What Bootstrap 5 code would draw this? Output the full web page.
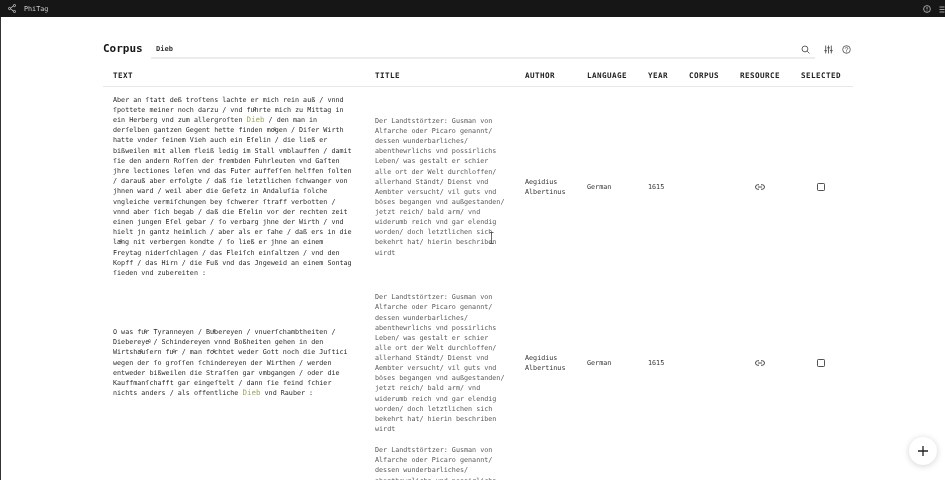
<!DOCTYPE html>
<html lang="de">
<head>
    <meta charset="UTF-8">
    <title>PhiTag - Corpus</title>
    <link href="https://cdn.jsdelivr.net/npm/bootstrap@5.3.0/dist/css/bootstrap.min.css" rel="stylesheet">
    <style>
        html, body {
            height: 100%;
            overflow: hidden;
        }
        body {
            background-color: #fff;
            font-family: "DejaVu Sans Mono", "Liberation Mono", monospace;
            font-size: 6.72px;
            line-height: 10.2px;
            color: #333;
        }
        .top-bar {
            height: 17px;
            background-color: #161616;
            color: #c8c8c8;
            padding: 1px 0 0 8px;
            will-change: transform;
        }
        .page-frame {
            height: 463px;
            border-left: 1px solid #333;
            padding: 0 92px 0 102px;
            will-change: transform;
        }
        .search-row {
            padding-top: 24px;
            height: 41px;
        }
        .corpus-title {
            width: 48px;
            font-size: 11px;
            font-weight: 700;
            line-height: 16px;
            color: #161616;
        }
        .search-box {
            width: 664px;
            height: 18px;
            padding: 0 5px;
            border-bottom: 2px solid #ececec;
            font-size: 7px;
            font-weight: 700;
            color: #333;
        }
        .tool-icons {
            height: 17px;
            gap: 9px;
            padding-left: 9px;
        }
        .corpus-table {
            table-layout: fixed;
            width: 750px;
            margin: 0;
            font-size: 6.72px;
            line-height: 10.2px;
        }
        .corpus-table th {
            height: 28.5px;
            padding: 8px 10px 0;
            font-size: 7.6px;
            letter-spacing: .42px;
            font-weight: 700;
            color: #222;
            vertical-align: middle;
            border-bottom: 1px solid #e8e8e8;
            white-space: nowrap;
        }
        .corpus-table td {
            padding: 5.6px 10px;
            border: 0;
            vertical-align: middle;
            color: #333;
        }
        .corpus-table td.text-cell {
            padding-top: 7.5px;
            padding-bottom: 8.5px;
            color: #2a2a2a;
        }
        .corpus-table td.title-cell {
            line-height: 10.13px;
            color: #5a5a5a;
        }
        .corpus-table td.icon-cell {
            padding-right: 12px;
            text-align: center;
        }
        .hit-word {
            font-size: 7.5px;
            color: #98a864;
        }
        .round-add {
            position: fixed;
            right: 8px;
            bottom: 15px;
            width: 28px;
            height: 28px;
            background-color: #fff;
            box-shadow: 0 1px 6px rgba(0, 0, 0, .18);
        }
        .beam-cursor {
            position: fixed;
            left: 489px;
            top: 232px;
        }
    </style>
</head>
<body>

<nav class="navbar top-bar d-flex align-items-center justify-content-between flex-nowrap">
    <div class="d-flex align-items-center gap-1">
        <svg width="8" height="9" viewBox="0 0 16 18" fill="none" stroke="#c8c8c8" stroke-width="1.8"><circle cx="13" cy="3" r="2.2"/><circle cx="3" cy="9" r="2.2"/><circle cx="13" cy="15" r="2.2"/><path d="M5 8l6-4M5 10l6 4"/></svg>
        <span class="ms-1">PhiTag</span>
    </div>
    <div class="d-flex align-items-center gap-2">
        <svg width="8" height="8" viewBox="0 0 16 16" fill="none" stroke="#c8c8c8" stroke-width="1.6"><circle cx="8" cy="8" r="6.8"/><path d="M8 4v5M8 11v1.6"/></svg>
        <svg width="6" height="7" viewBox="0 0 10 14" fill="none" stroke="#c8c8c8" stroke-width="1.6"><path d="M0 2h10M0 7h10M0 12h10"/></svg>
    </div>
</nav>

<div class="page-frame">
    <div class="search-row d-flex align-items-start">
        <div class="corpus-title">Corpus</div>
        <div class="search-box d-flex align-items-center justify-content-between">
            <span>Dieb</span>
            <svg width="9" height="9" viewBox="0 0 16 16" fill="none" stroke="#444" stroke-width="1.5"><circle cx="7" cy="7" r="5.2"/><path d="M11 11l4 4"/></svg>
        </div>
        <div class="tool-icons d-flex align-items-center">
            <svg width="9" height="9" viewBox="0 0 16 16" fill="none" stroke="#444" stroke-width="1.5"><path d="M3 1v14M8 1v14M13 1v14"/><path d="M.5 10h5M5.5 5h5M10.500 10h5"/></svg>
            <svg width="9" height="9" viewBox="0 0 16 16" fill="none" stroke="#444" stroke-width="1.4"><circle cx="8" cy="8" r="6.8"/><path d="M5.800 6.200a2.200 2.200 0 1 1 3.400 1.900C8.400 8.700 8 9 8 10M8 11.500v1.500"/></svg>
        </div>
    </div>

    <table class="table corpus-table">
        <colgroup>
            <col style="width:262px"><col style="width:150px"><col style="width:62px"><col style="width:61px"><col style="width:41px"><col style="width:51px"><col style="width:61px"><col style="width:62px">
        </colgroup>
        <thead>
            <tr>
                <th>TEXT</th>
                <th>TITLE</th>
                <th>AUTHOR</th>
                <th>LANGUAGE</th>
                <th>YEAR</th>
                <th>CORPUS</th>
                <th>RESOURCE</th>
                <th>SELECTED</th>
            </tr>
        </thead>
        <tbody id="rows"></tbody>
    </table>
</div>

<div class="round-add rounded-circle d-flex align-items-center justify-content-center">
    <svg width="10" height="10" viewBox="0 0 10 10" stroke="#222" stroke-width="1.3"><path d="M5 0v10M0 5h10"/></svg>
</div>

<svg class="beam-cursor" width="5" height="12" viewBox="0 0 5 12" fill="none" stroke="#444" stroke-width=".8"><path d="M.5.500h4M2.500.500v11M.5 11.500h4"/></svg>

<script>
const titulo = "Der Landtstörtzer: Gusman von Alfarche oder Picaro genannt/ dessen wunderbarliches/ abenthewrlichs vnd possirlichs Leben/ was gestalt er schier alle ort der Welt durchloffen/ allerhand Ständt/ Dienst vnd Aembter versucht/ vil guts vnd böses begangen vnd außgestanden/ jetzt reich/ bald arm/ vnd widerumb reich vnd gar elendig worden/ doch letztlichen sich bekehrt hat/ hierin beschriben wirdt";

const linhas = [
    "Aber an ſtatt deß troſtens lachte er mich rein auß / vnnd ſpottete meiner noch darzu / vnd fu\u0364hrte mich zu Mittag in ein Herberg vnd zum allergroſten <span class=\"hit-word\">Dieb</span> / den man in derſelben gantzen Gegent hette finden mo\u0364gen / Diſer Wirth hatte vnder ſeinem Vieh auch ein Eſelin / die ließ er bißweilen mit allem fleiß ledig im Stall vmblauffen / damit ſie den andern Roſſen der frembden Fuhrleuten vnd Gaſten jhre lectiones leſen vnd das Futer auffeſſen helffen ſolten / darauß aber erfolgte / daß ſie letztlichen ſchwanger von jhnen ward / weil aber die Geſetz in Andaluſia ſolche vngleiche vermiſchungen bey ſchwerer ſtraff verbotten / vnnd aber ſich begab / daß die Eſelin vor der rechten zeit einen jungen Eſel gebar / ſo verbarg jhne der Wirth / vnd hielt jn gantz heimlich / aber als er ſahe / daß ers in die la\u0364ng nit verbergen kondte / ſo ließ er jhne an einem Freytag niderſchlagen / das Fleiſch einſaltzen / vnd den Kopff / das Hirn / die Fuß vnd das Jngeweid an einem Sontag ſieden vnd zubereiten :",
    "O was fu\u0364r Tyranneyen / Bu\u0364bereyen / vnuerſchambtheiten / Diebereye\u0364 / Schindereyen vnnd Boßheiten gehen in den Wirtsha\u0364uſern fu\u0364r / man fo\u0364chtet weder Gott noch die Juſtici wegen der ſo groſſen ſchindereyen der Wirthen / werden entweder bißweilen die Straſſen gar vmbgangen / oder die Kauffmanſchafft gar eingeſtelt / dann ſie feind ſchier nichts anders / als offentliche <span class=\"hit-word\">Dieb</span> vnd Rauber :",
    ""
];

// monta as linhas da tabela
const corpo = document.getElementById('rows');
linhas.forEach(texto => {
    const tr = document.createElement('tr');
    tr.innerHTML = `
        <td class="text-cell">${texto}</td>
        <td class="title-cell">${titulo}</td>
        <td>Aegidius Albertinus</td>
        <td>German</td>
        <td>1615</td>
        <td></td>
        <td class="icon-cell"><svg width="10" height="6" viewBox="0 0 20 12" fill="none" stroke="#333" stroke-width="1.8"><path d="M8 1.500H5.500a4.500 4.500 0 0 0 0 9H8M12 1.500h2.500a4.500 4.500 0 0 1 0 9H12M6 6h8"/></svg></td>
        <td class="icon-cell"><svg width="8" height="8" viewBox="0 0 16 16" fill="none" stroke="#333" stroke-width="1.700"><rect x="1" y="1" width="14" height="14" rx="1.500"/></svg></td>`;
    corpo.appendChild(tr);
});
</script>

</body>
</html>
